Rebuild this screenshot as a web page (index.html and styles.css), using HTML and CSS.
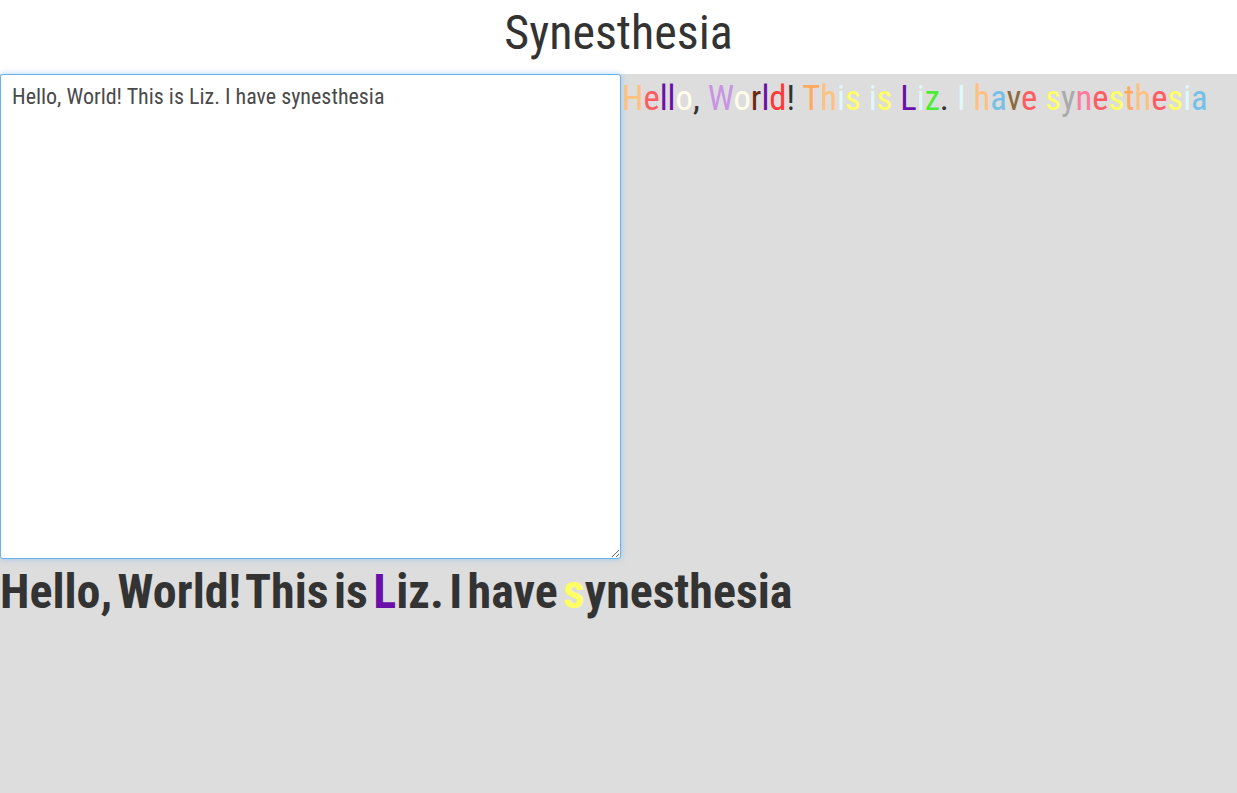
FILE: index.html
```html
<!DOCTYPE html>
<html lang="en">
<head>
<meta charset="utf-8">
<title>Synesthesia</title>
<link rel="stylesheet" href="styles.css">
</head>
<body>
<header class="top">
  <h1 class="title">Synesthesia</h1>
</header>
<main class="workspace">
  <div class="row">
    <textarea class="input" spellcheck="false">Hello, World! This is Liz. I have synesthesia</textarea>
    <div class="colored"><span class="c-peach">H</span><span class="c-coral">e</span><span class="c-purple">l</span><span class="c-purple">l</span><span class="c-ivory">o</span><span class="c-dark">,</span> <span class="c-lilac">W</span><span class="c-ivory">o</span><span class="c-rust">r</span><span class="c-purple">l</span><span class="c-red">d</span><span class="c-dark">!</span> <span class="c-orange">T</span><span class="c-peach">h</span><span class="c-cyan">i</span><span class="c-yellow">s</span> <span class="c-cyan">i</span><span class="c-yellow">s</span> <span class="c-purple">L</span><span class="c-cyan">i</span><span class="c-green">z</span><span class="c-dark">.</span> <span class="c-cyan">I</span> <span class="c-peach">h</span><span class="c-blue">a</span><span class="c-brown">v</span><span class="c-coral">e</span> <span class="c-yellow">s</span><span class="c-grey">y</span><span class="c-pink">n</span><span class="c-coral">e</span><span class="c-yellow">s</span><span class="c-orange">t</span><span class="c-peach">h</span><span class="c-coral">e</span><span class="c-yellow">s</span><span class="c-cyan">i</span><span class="c-blue">a</span></div>
  </div>
  <div class="bold-line">Hello, World! This is <span class="c-purple">L</span>iz. I have <span class="c-yellow">s</span>ynesthesia</div>
</main>
</body>
</html>
```
FILE: styles.css
```css
html, body {
  margin: 0;
  padding: 0;
}
body {
  background: #dddddd;
  color: #333333;
  font-family: "Roboto Condensed", Roboto, "Liberation Sans", sans-serif;
  font-stretch: condensed;
  min-height: 793px;
}
.top {
  background: #ffffff;
  height: 74px;
  box-sizing: border-box;
  padding-top: 5px;
}
.title {
  margin: 0;
  text-align: center;
  font-size: 48px;
  line-height: 56px;
  font-weight: 400;
  color: #333333;
}
.row {
  display: flex;
  align-items: flex-start;
}
.input {
  display: block;
  width: 621px;
  height: 485px;
  box-sizing: border-box;
  margin: 0;
  padding: 9px 11px;
  border: 1px solid #66b3f0;
  border-radius: 3px;
  box-shadow: 0 0 6px rgba(102, 175, 233, 0.55);
  outline: none;
  background: #ffffff;
  color: #4a4a4a;
  font-family: inherit;
  font-stretch: condensed;
  font-size: 22px;
  line-height: 26px;
  flex: none;
}
.colored {
  font-size: 34.6px;
  line-height: 48px;
  padding-left: 1px;
  white-space: nowrap;
}
.bold-line {
  font-size: 48px;
  font-weight: 700;
  line-height: 56px;
  margin-top: 5px;
  word-spacing: -5.7px;
}
.c-peach { color: #ffc080; }
.c-coral { color: #ff5c62; }
.c-purple { color: #6a10a8; }
.c-ivory { color: #fffdea; }
.c-dark { color: #333333; }
.c-lilac { color: #c894e4; }
.c-rust { color: #6b2812; }
.c-red { color: #ff3838; }
.c-orange { color: #ffaa5e; }
.c-cyan { color: #e0f8f8; }
.c-yellow { color: #ffff66; }
.c-green { color: #48ee33; }
.c-blue { color: #74c0e6; }
.c-brown { color: #8b6a3c; }
.c-grey { color: #aaaaaa; }
.c-pink { color: #ff7a9c; }
```
